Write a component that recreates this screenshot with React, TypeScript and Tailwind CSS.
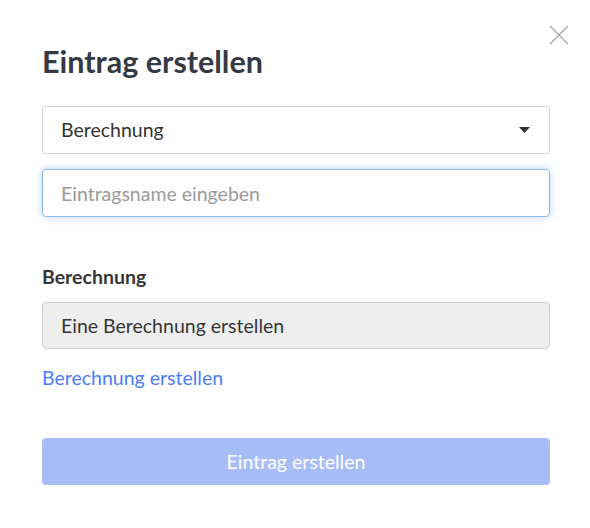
import React from 'react';

export default function App() {
  return (
    <div className="relative min-h-[528px] w-[590px] bg-white font-['Lato','Noto_Sans',sans-serif]">
      {/* Close button */}
      <button type="button" className="absolute right-[21px] top-[25px] h-[20px] w-[20px]">
        <svg viewBox="0 0 20 20" className="h-[20px] w-[20px]" fill="none" stroke="#a8a8a8" strokeWidth="1.4">
          <path d="M1 1L19 19M19 1L1 19" />
        </svg>
      </button>

      <div className="pl-[42px] pr-[40px] pt-[41px]">
        <h2 className="text-[30.5px] font-bold leading-[40px] text-[#353a45]">Eintrag erstellen</h2>

        <div className="mt-[25px] flex h-[48px] items-center justify-between rounded-[4px] border border-[#cfcfcf] bg-white pl-[18px] pr-[19px]">
          <span className="text-[19.5px] text-[#333]">Berechnung</span>
          <svg viewBox="0 0 11 6" className="h-[6px] w-[11px]">
            <path d="M0 0H11L5.5 6Z" fill="#333" />
          </svg>
        </div>

        <input
          type="text"
          placeholder="Eintragsname eingeben"
          className="mt-[15px] h-[48px] w-full rounded-[4px] border border-[#8fb7ef] bg-white px-[18px] text-[19.5px] text-[#333] shadow-[0_0_8px_rgba(102,163,240,0.45)] outline-none placeholder:text-[#9a9a9a]"
        />

        <div className="mt-[48px] text-[19.5px] font-bold leading-[24px] text-[#363636]">Berechnung</div>

        <div className="mt-[13px] flex h-[47px] items-center rounded-[4px] border border-[#cfcfcf] bg-[#eeeeee] px-[18px] text-[19.5px] text-[#363636]">
          Eine Berechnung erstellen
        </div>

        <a href="#" className="mt-[17px] block w-fit text-[19.5px] leading-[24px] text-[#4a7ef7]">
          Berechnung erstellen
        </a>

        <button
          type="button"
          disabled
          className="mt-[48px] flex h-[47px] w-full items-center justify-center rounded-[4px] bg-[#a8bdf8] text-[19.5px] text-white"
        >
          Eintrag erstellen
        </button>
      </div>
    </div>
  );
}
